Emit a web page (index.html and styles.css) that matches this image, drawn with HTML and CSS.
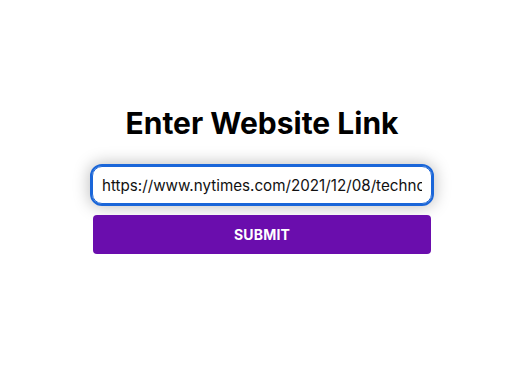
FILE: index.html
```html
<!DOCTYPE html>
<html>
<head>
<meta charset="utf-8">
<link rel="stylesheet" href="styles.css">
</head>
<body>
<main class="page">
  <form class="card">
    <h1 class="title">Enter Website Link</h1>
    <input class="url-input" type="text" value="https://www.nytimes.com/2021/12/08/technology/some-article.html">
    <button class="submit" type="button">SUBMIT</button>
  </form>
</main>
</body>
</html>
```
FILE: styles.css
```css
html, body {
  margin: 0;
  padding: 0;
  background: #ffffff;
}
.page {
  width: 516px;
  height: 379px;
  display: flex;
  justify-content: center;
  padding-top: 104px;
  box-sizing: border-box;
  font-family: Inter, "Open Sans", sans-serif;
}
.card {
  width: 338px;
  margin-left: 8px;
  display: flex;
  flex-direction: column;
  align-items: stretch;
}
.title {
  margin: 0 0 24px 0;
  font-size: 30px;
  line-height: 38px;
  font-weight: 700;
  color: #000000;
  text-align: center;
}
.url-input {
  box-sizing: border-box;
  height: 38px;
  margin: 0 -1px;
  padding: 0 9px;
  border: 1px solid #1a66d9;
  outline: 2px solid #1a66d9;
  outline-offset: 0;
  border-radius: 10px;
  font-family: inherit;
  font-size: 15.2px;
  color: #111111;
  box-shadow: 0 0 16px 3px rgba(0, 0, 0, 0.25);
}
.submit {
  margin-top: 11px;
  height: 39px;
  border: none;
  border-radius: 4px;
  background: #6a0dad;
  color: #ffffff;
  font-family: inherit;
  font-size: 14px;
  font-weight: 700;
  letter-spacing: 0.2px;
}
```
